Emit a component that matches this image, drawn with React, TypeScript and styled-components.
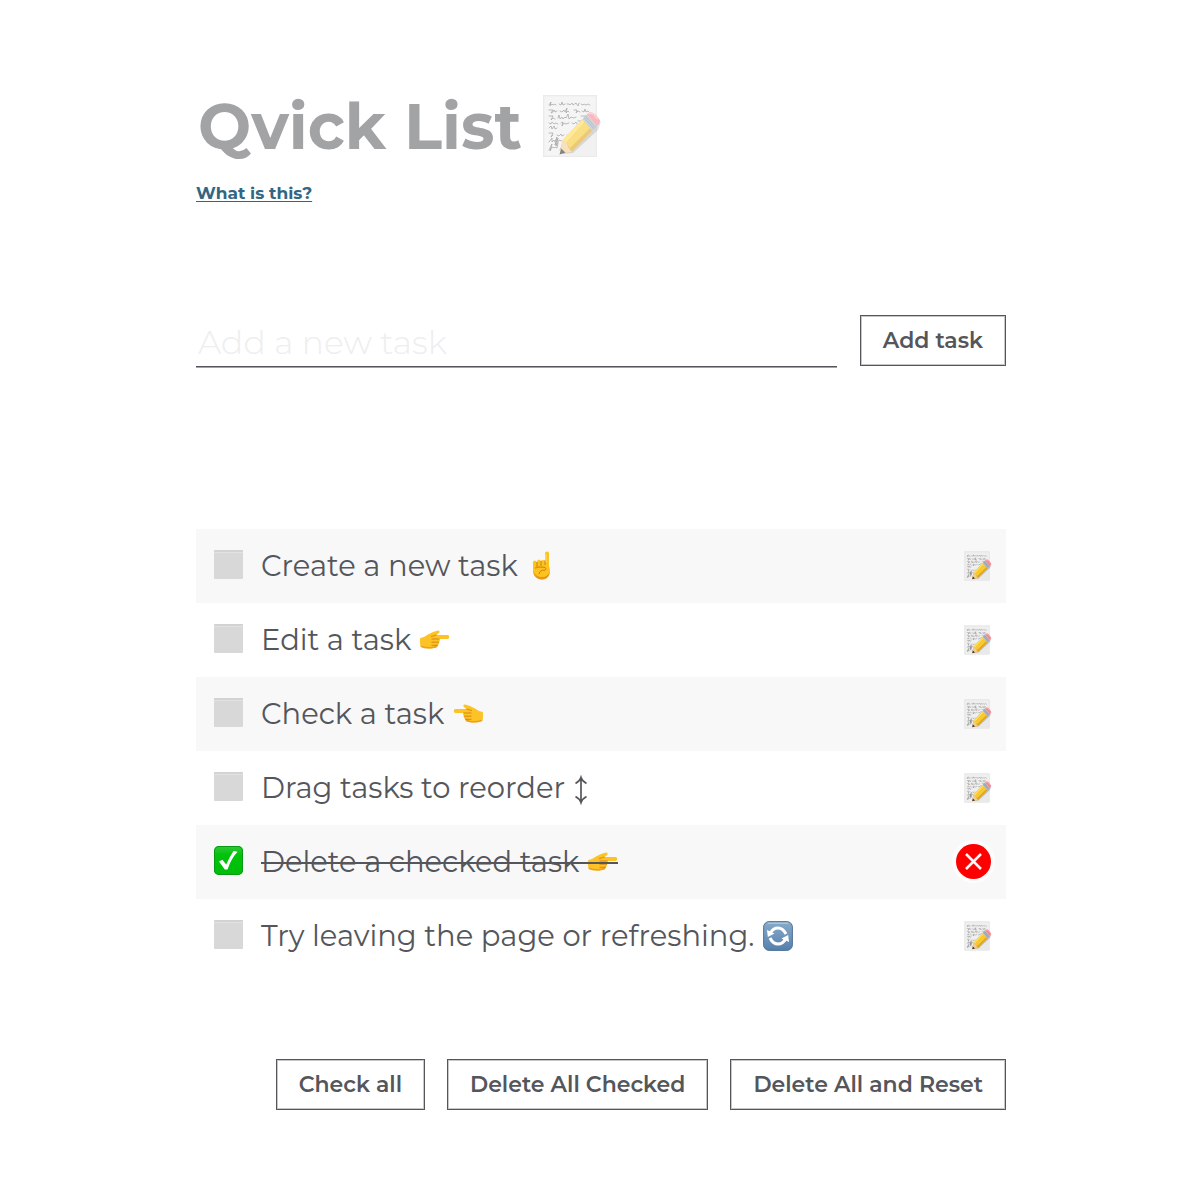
import React, { useState } from "react";
import styled, { createGlobalStyle } from "styled-components";

const ink = "#54565b";

const GlobalStyle = createGlobalStyle`
  * { box-sizing: border-box; }
  body {
    margin: 0;
    background: #fff;
    color: ${ink};
    font-family: Montserrat, Inter, "Liberation Sans", sans-serif;
  }
`;

const Page = styled.main`
  padding: 88px 194px 89px 196px;
`;

const Title = styled.h1`
  display: flex;
  align-items: center;
  gap: 20px;
  margin: 0;
  padding-left: 2px;
  color: #a2a3a5;
  font-size: 63px;
  font-weight: 700;
  line-height: 78px;
  svg { margin-bottom: 2px; opacity: 0.6; }
`;

const HelpLink = styled.a`
  display: inline-block;
  margin-top: 15px;
  color: #336680;
  font-size: 17px;
  font-weight: 700;
  line-height: 24px;
  text-decoration-thickness: 1px;
  text-underline-offset: 2px;
`;

const AddForm = styled.form`
  display: flex;
  align-items: flex-start;
  gap: 23px;
  margin-top: 110px;
`;

const TaskInput = styled.input`
  flex: 1;
  min-width: 0;
  height: 52px;
  padding: 2px 2px 0;
  border: 0;
  border-bottom: 1px solid ${ink};
  box-shadow: 0 1px 0 #a2a3a9;
  outline: 0;
  background: transparent;
  color: ${ink};
  font-family: inherit;
  font-size: 33px;
  font-weight: 300;
  &::placeholder { color: #eeeeee; opacity: 1; }
`;

const Button = styled.button`
  height: 51px;
  padding: 0 22px;
  border: 1px solid ${ink};
  outline: 1px solid #54565b55;
  outline-offset: -2px;
  background: #fff;
  color: ${ink};
  font-family: inherit;
  font-size: 22px;
  font-weight: 600;
  white-space: nowrap;
  cursor: pointer;
`;

const TaskList = styled.ul`
  margin: 162px 0 86px;
  padding: 0;
  list-style: none;
`;

const TaskRow = styled.li`
  display: flex;
  align-items: center;
  height: 74px;
  padding: 0 14px 0 18px;
  &:nth-child(odd) { background: #f8f8f8; }
`;

const CheckCell = styled.span`
  display: grid;
  flex: none;
  margin: 0 18px 3px 0;
  svg { grid-area: 1 / 1; pointer-events: none; }
`;

const Checkbox = styled.input`
  appearance: none;
  grid-area: 1 / 1;
  width: 29px;
  height: 29px;
  margin: 0;
  border-radius: 1px;
  background: #d8d8d8;
  box-shadow: inset 0 2px 0 #d3d3d3, inset 0 3px 0 #e2e2e2;
  cursor: pointer;
  &:checked {
    border-radius: 5px;
    background: linear-gradient(#35c838, #00c30c 30%, #00bd0a);
    box-shadow: inset 0 0 0 1px #079a12;
  }
`;

const TaskLabel = styled.label<{ $done: boolean }>`
  position: relative;
  display: flex;
  align-items: center;
  gap: 9px;
  font-size: 29px;
  font-weight: 400;
  line-height: 40px;
  &::after {
    content: "";
    display: ${(p) => (p.$done ? "block" : "none")};
    position: absolute;
    left: 0;
    right: 0;
    top: 50%;
    height: 2px;
    background: ${ink};
  }
`;

const IconButton = styled.button`
  display: flex;
  margin-left: auto;
  padding: 0;
  border: 0;
  background: none;
  cursor: pointer;
`;

const DeleteButton = styled(IconButton)`
  align-items: center;
  justify-content: center;
  width: 35px;
  height: 35px;
  margin: 0 1px 2px auto;
  border-radius: 50%;
  background: #f00;
  box-shadow: 0 0 0 4px #fdfdfd;
`;

const Actions = styled.footer`
  display: flex;
  flex-wrap: wrap;
  justify-content: flex-end;
  gap: 22px;
`;

const scribbles = [
  "M7 11l2-3-1 4 2-2 1 1 2-1 1 1M17 10l2 1 1-3 1 3 2-1M25 10l2 0 1 1 2-2 1 2 3-2 2 3 1-3M39 10l2 1 1-1 2 1 2-1 2 1",
  "M7 16h4l-2 3 2-1 1-2 1 2 2-1M18 17l2 1 2-2 1 2 2-4-1 5 2-2 1 1M32 16h3l-1 3 2-2 2 1M40 17l2 1 1-3 1 3 2-1 1 1",
  "M7 22h4l-2 4 2-2 2 1M16 24l1-3 1 4 2-2 1 2 2-2 1 1 2-4 1 5 2-2 3 1 2-1M39 22h5l-2 4 2-2 3 1",
  "M7 29l2 1 1-2 2 2 2-1 2 1M19 29l2-1-1 4 2-3 2 1 3-1M30 29l2 1 2-2 1 2M36 27h4",
  "M7 34l2-2 1 3 2-3 1 3 2-1",
  "M7 39h4l-2 4 2-2M15 41l2 1 2-2 1 2 2-1M25 41l2 1 2-2",
  "M7 48l3-4 0 4 2-2 1 2 2-5-2 8 3-7-2 8 3-6 3 1",
  "M7 56l3-6-2 7 2-4 2 1 1-1 2 1 1-5M18 56l3-6",
];

function MemoIcon({ width, height }: { width: number; height: number }) {
  return (
    <svg width={width} height={height} viewBox="0 0 60 64" aria-hidden="true">
      <rect x="1.5" y="1.5" width="53" height="61" fill="#e9e9e9" stroke="#dedede" />
      <path d="M3 3h50v25L20 61H3z" fill="#efefef" />
      {scribbles.map((d) => (
        <path key={d} d={d} fill="none" stroke="#646464" strokeWidth=".7" strokeLinecap="round" strokeLinejoin="round" />
      ))}
      <path d="M20 60l11-1 25-23 3-9-10 8-21 20z" fill="#555" opacity=".3" />
      <path d="M20.3 46.7L40.3 25.3 50.3 36.7 29.7 57.7 18 60z" fill="#e2a51c" />
      <path d="M20.3 46.7L40.3 25.3 43 28 24 49z" fill="#ffdc55" />
      <path d="M24 49L43 28 48 34 28 54z" fill="#f8c931" />
      <path d="M20.3 46.7l4 1.8 2 4.8 3.4 4.4L18 60z" fill="#f2cd92" />
      <path d="M19.2 54.5l4.3 4.3L17.5 60.5z" fill="#333" />
      <path d="M40.3 25.3l4.5-5L54.7 32l-4.4 4.7z" fill="#a8b8c6" />
      <path d="M42 23.5l10 11.4M43.4 22l10 11.5" stroke="#718394" strokeWidth=".7" />
      <path d="M44.8 20.3Q49 16 54 21L57 25Q60 28 54.7 32z" fill="#f08b96" />
      <path d="M46.5 20q3-2 6 1l3 4" fill="none" stroke="#ffb7bb" strokeWidth="1.5" />
    </svg>
  );
}

function HandUp() {
  return (
    <svg width="26" height="30" viewBox="-5 1 26 30" aria-hidden="true">
      <path d="M13 3.5Q13 1.5 15 1.5T17 3.5V16Q18 18 18 21C18 26 15 29.5 10 29.5S1 26 1 21V12Q1 10.5 3 10.5L5 12Q5 9.5 7 9.5L9 11Q10 9 13 11z" fill="#fcc21d" />
      <path d="M1 21Q3 29.5 10 29.5T18 21Q16 27 10 27T1 21" fill="#e8951b" />
      <path d="M5 12v5M9 11v5M13 10v5M3 18q2 0 3-1l7 .3q2 1 0 3-5-1-6 4" fill="none" stroke="#ca7b0f" strokeWidth=".9" />
      <path d="M14 4v8" stroke="#ffe26b" />
    </svg>
  );
}

function HandSide({ flip = false }: { flip?: boolean }) {
  return (
    <svg width="30" height="20" viewBox="0 0 30 20" aria-hidden="true">
      <g transform={flip ? "translate(30 0) scale(-1 1)" : undefined}>
        <path d="M.3 8Q5 7 8 4.5 13 1.5 18 .5 20 .5 19.5 2.5L16.5 5H27.5Q29.3 5.2 29.2 7T27.5 9H19.5Q20.5 10 19 12.3 19.5 14 17.8 15.3 17 18 14 18 7 19.5.8 17Q-.6 12.5.3 8z" fill="#fcc226" />
        <path d="M.8 15.5Q7 18 14 16.5L17.8 14Q18 18 14 18 7 19.5.8 17z" fill="#eda021" />
        <path d="M11.5 9h8M11.5 12.2h7.7M11.5 15.3h6M11 6.5q2-.3 5.5-1.5" fill="none" stroke="#cd7c10" strokeWidth=".8" />
      </g>
    </svg>
  );
}

function UpDownArrow() {
  return (
    <svg width="14" height="34" viewBox="0 -4 14 34" fill="none" stroke={ink} strokeWidth="1.7" aria-hidden="true">
      <path d="M7 4v22M1.5 8.5Q6 6 7 2.5 8 6 12.5 8.5M1.5 21.5Q6 24 7 27.5 8 24 12.5 21.5" />
    </svg>
  );
}

function RefreshIcon() {
  return (
    <svg width="30" height="30" viewBox="0 0 30 30" aria-hidden="true">
      <defs>
        <linearGradient id="refresh-fill" x2="0" y2="1">
          <stop stopColor="#8aabc9" />
          <stop offset="1" stopColor="#557fac" />
        </linearGradient>
      </defs>
      <rect x=".6" y=".6" width="28.8" height="28.8" rx="5.5" fill="url(#refresh-fill)" stroke="#507497" />
      <path d="M5 2.2h20" stroke="#b8d0e3" strokeLinecap="round" />
      <path d="M7.5 12Q10 7 15 7 20 7 23 13M22.5 18Q20 23 15 23 10 23 7 17" fill="none" stroke="#fff" strokeWidth="3" />
      <path d="M4 9l.8 7 6.7-3.5zM26 21l-.8-7-6.7 3.5z" fill="#fff" />
    </svg>
  );
}

const initialTasks = [
  { id: 1, text: "Create a new task", icon: <HandUp />, done: false },
  { id: 2, text: "Edit a task", icon: <HandSide />, done: false },
  { id: 3, text: "Check a task", icon: <HandSide flip />, done: false },
  { id: 4, text: "Drag tasks to reorder", icon: <UpDownArrow />, done: false },
  { id: 5, text: "Delete a checked task", icon: <HandSide />, done: true },
  { id: 6, text: "Try leaving the page or refreshing.", icon: <RefreshIcon />, done: false },
];

export default function App() {
  const [tasks, setTasks] = useState(initialTasks);
  const [draft, setDraft] = useState("");

  const addTask = (event: React.FormEvent) => {
    event.preventDefault();
    if (!draft.trim()) return;
    setTasks([...tasks, { id: Date.now(), text: draft, icon: <></>, done: false }]);
    setDraft("");
  };
  const toggle = (id: number) =>
    setTasks(tasks.map((t) => (t.id === id ? { ...t, done: !t.done } : t)));

  return (
    <Page>
      <GlobalStyle />
      <header>
        <Title>
          Qvick List
          <MemoIcon width={60} height={64} />
        </Title>
        <HelpLink href="#about">What is this?</HelpLink>
      </header>
      <AddForm onSubmit={addTask}>
        <TaskInput
          aria-label="Add a new task"
          placeholder="Add a new task"
          value={draft}
          onChange={(e) => setDraft(e.target.value)}
        />
        <Button type="submit">Add task</Button>
      </AddForm>
      <TaskList>
        {tasks.map((task) => (
          <TaskRow key={task.id}>
            <CheckCell>
              <Checkbox
                type="checkbox"
                id={`task-${task.id}`}
                checked={task.done}
                onChange={() => toggle(task.id)}
              />
              {task.done && (
                <svg width="29" height="29" viewBox="0 0 29 29" aria-hidden="true">
                  <path d="M5 15.5l3.4-1.8 3.8 4.8Q15.5 11 19.5 5l4 .8Q17 13 13.5 23.5h-2.7z" fill="#fff" />
                </svg>
              )}
            </CheckCell>
            <TaskLabel htmlFor={`task-${task.id}`} $done={task.done}>
              {task.text}
              {task.icon}
            </TaskLabel>
            {task.done ? (
              <DeleteButton
                type="button"
                aria-label="Delete task"
                onClick={() => setTasks(tasks.filter((t) => t.id !== task.id))}
              >
                <svg width="17" height="17" viewBox="0 0 17 17" fill="none" stroke="#fff" strokeWidth="2.5" aria-hidden="true">
                  <path d="M1 1l15 15M16 1L1 16" />
                </svg>
              </DeleteButton>
            ) : (
              <IconButton type="button" aria-label="Edit task">
                <MemoIcon width={28} height={30} />
              </IconButton>
            )}
          </TaskRow>
        ))}
      </TaskList>
      <Actions>
        <Button type="button" onClick={() => setTasks(tasks.map((t) => ({ ...t, done: true })))}>
          Check all
        </Button>
        <Button type="button" onClick={() => setTasks(tasks.filter((t) => !t.done))}>
          Delete All Checked
        </Button>
        <Button type="button" onClick={() => setTasks(initialTasks)}>
          Delete All and Reset
        </Button>
      </Actions>
    </Page>
  );
}
